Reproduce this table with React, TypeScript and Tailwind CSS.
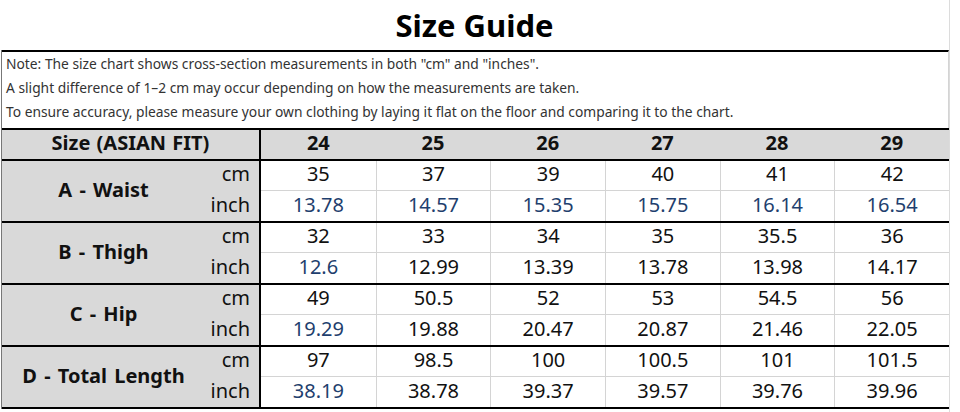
const sizes = ['24', '25', '26', '27', '28', '29'];

type Group = {
  name: string;
  cm: string[];
  inch: string[];
  blueInch: number[];
};

const groups: Group[] = [
  {
    name: 'A - Waist',
    cm: ['35', '37', '39', '40', '41', '42'],
    inch: ['13.78', '14.57', '15.35', '15.75', '16.14', '16.54'],
    blueInch: [0, 1, 2, 3, 4, 5],
  },
  {
    name: 'B - Thigh',
    cm: ['32', '33', '34', '35', '35.5', '36'],
    inch: ['12.6', '12.99', '13.39', '13.78', '13.98', '14.17'],
    blueInch: [0],
  },
  {
    name: 'C - Hip',
    cm: ['49', '50.5', '52', '53', '54.5', '56'],
    inch: ['19.29', '19.88', '20.47', '20.87', '21.46', '22.05'],
    blueInch: [0],
  },
  {
    name: 'D - Total Length',
    cm: ['97', '98.5', '100', '100.5', '101', '101.5'],
    inch: ['38.19', '38.78', '39.37', '39.57', '39.76', '39.96'],
    blueInch: [0],
  },
];

const notes = [
  'Note: The size chart shows cross-section measurements in both "cm" and "inches".',
  'A slight difference of 1–2 cm may occur depending on how the measurements are taken.',
  'To ensure accuracy, please measure your own clothing by laying it flat on the floor and comparing it to the chart.',
];

function GroupRows({ group }: { group: Group }) {
  return (
    <div className="flex h-[62px] border-t-2 border-black">
      <div className="flex w-[259px] border-r-2 border-black bg-[#d9d9d9]">
        <div className="flex w-[203px] items-center justify-center pb-[2px] text-[20px] font-bold [word-spacing:2px]">
          {group.name}
        </div>
        <div className="flex w-[54px] flex-col text-right text-[20px]">
          <div className="h-[30px] leading-[26px] pr-[9px]">cm</div>
          <div className="h-[30px] leading-[27px] pr-[9px]">inch</div>
        </div>
      </div>
      <div className="grid flex-1 grid-cols-6 grid-rows-2">
        {group.cm.map((v, i) => (
          <div
            key={'cm' + i}
            className={`border-b border-[#d4d4d4] text-center text-[20px] leading-[26px] ${i > 0 ? 'border-l' : ''}`}
          >
            {v}
          </div>
        ))}
        {group.inch.map((v, i) => (
          <div
            key={'in' + i}
            className={`border-[#d4d4d4] text-center text-[20px] leading-[27px] ${i > 0 ? 'border-l' : ''} ${
              group.blueInch.includes(i) ? 'text-[#1f3f6e]' : ''
            }`}
          >
            {v}
          </div>
        ))}
      </div>
    </div>
  );
}

export default function App() {
  return (
    <div className="h-[412px] w-[960px] overflow-hidden bg-white text-[#111] [font-family:'Noto_Sans',sans-serif]">
      <div className="h-[412px] w-[950px] border-r border-[#dcdcdc]">
        <div className="flex h-[50px] items-center justify-center text-[31px] font-bold text-black">
          Size Guide
        </div>
        <div className="ml-[1px] w-[948px] border-l border-[#777]">
          <div className="h-[78px] border-t-2 border-r border-black border-r-[#d4d4d4] pl-[4px] text-[13.8px] leading-[24px] text-[#333]">
            {notes.map((n) => (
              <div key={n} className="whitespace-nowrap">
                {n}
              </div>
            ))}
          </div>
          <div className="flex h-[31px] border-t-2 border-black bg-[#d9d9d9] text-[20px] font-bold leading-[26px]">
            <div className="w-[259px] border-r-2 border-black text-center [word-spacing:1px]">Size (ASIAN FIT)</div>
            <div className="grid flex-1 grid-cols-6">
              {sizes.map((s) => (
                <div key={s} className="text-center">
                  {s}
                </div>
              ))}
            </div>
          </div>
          {groups.map((g) => (
            <GroupRows key={g.name} group={g} />
          ))}
          <div className="border-t-2 border-black" />
        </div>
      </div>
    </div>
  );
}
